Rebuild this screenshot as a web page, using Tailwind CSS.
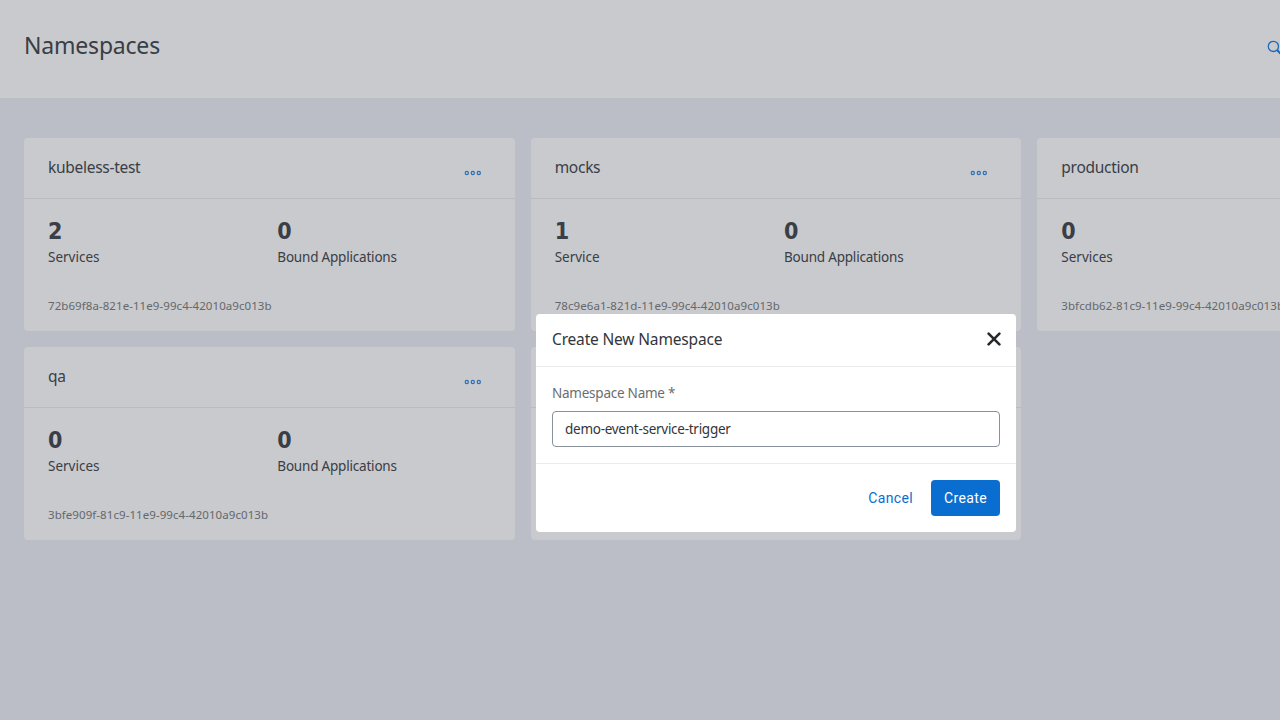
<!DOCTYPE html>
<html lang="en">
<head>
<meta charset="utf-8">
<title>Namespaces</title>
<script src="https://cdn.jsdelivr.net/npm/@tailwindcss/browser@4"></script>
</head>
<body class="h-screen w-screen overflow-hidden bg-[#eeeff7] font-['Noto_Sans',sans-serif] text-[#43484e]">
<div class="relative flex h-[846px] w-[1552px] flex-col">
  <header class="flex h-[98px] shrink-0 justify-between bg-white pl-6 pr-[269px]">
    <h1 class="pt-[29px] text-[23px] leading-8 tracking-[-0.2px]">Namespaces</h1>
    <svg class="mt-10 size-4 shrink-0" viewBox="0 0 16 16" fill="none" stroke="#2280e0"><circle cx="6.4" cy="6.4" r="5.1" stroke-width="1.3"/><path d="M10 10l4.5 4.5" stroke-width="2.2"/></svg>
  </header>
  <main class="grid grid-cols-3 gap-4 px-6 pt-10" id="cards"></main>
  <div class="absolute inset-0 flex items-center justify-center bg-[#1e222f]/24">
    <section class="flex h-[218px] w-[480px] flex-col rounded bg-white text-[#32363a]">
      <header class="flex h-[53px] items-center justify-between border-b border-[#eaebec] pl-4 pr-[15px]">
        <h2 class="-mt-0.5 text-[15.5px] leading-5 tracking-[-0.17px]">Create New Namespace</h2>
        <svg class="-mt-0.5 size-[14px]" viewBox="0 0 14 14" fill="none" stroke="#272a2d" stroke-width="2.6" stroke-linecap="round"><path d="M1.6 1.6l10.8 10.8M12.4 1.6L1.6 12.4"/></svg>
      </header>
      <div class="flex h-[97px] flex-col border-b border-[#eaebec] px-4 pt-4">
        <label class="text-[13.5px] leading-5 tracking-[-0.24px] text-[#6a6d70]">Namespace Name *</label>
        <div class="mt-2 flex h-9 items-center rounded border border-[#89919a] px-3 text-[13.5px] leading-5 tracking-[-0.27px]">demo-event-service-trigger</div>
      </div>
      <footer class="flex items-center justify-end pr-4 pt-4 font-['Roboto',sans-serif] text-sm tracking-[0.35px]">
        <button class="h-9 px-[18px] text-[#0a6ed1]">Cancel</button>
        <button class="h-9 w-[69px] rounded bg-[#0a6ed1] text-white">Create</button>
      </footer>
    </section>
  </div>
</div>
<script>
const items = [
  ['kubeless-test', '2', 'Services', '0', '72b69f8a-821e-11e9-99c4-42010a9c013b'],
  ['mocks', '1', 'Service', '0', '78c9e6a1-821d-11e9-99c4-42010a9c013b'],
  ['production', '0', 'Services', '0', '3bfcdb62-81c9-11e9-99c4-42010a9c013b'],
  ['qa', '0', 'Services', '0', '3bfe909f-81c9-11e9-99c4-42010a9c013b'],
  ['', '', '', '', '']
];
const number = n => `<div class="h-8 font-['DejaVu_Sans_Condensed','DejaVu_Sans',sans-serif] font-stretch-condensed text-[23px] font-bold leading-[33px] tracking-tight">${n}</div>`;
document.getElementById('cards').innerHTML = items.map(([name, n, label, b, id]) => `
  <article class="flex h-[193px] flex-col rounded bg-white">
    <div class="flex h-[61px] shrink-0 items-center justify-between border-b border-[#eaebec] pl-6 pr-[33px]">
      <h3 class="-mt-0.5 text-[15.5px] leading-5 tracking-[-0.28px]">${name}</h3>
      <svg class="mt-2.5 h-[6px] w-[18px]" viewBox="0 0 18 6" fill="none" stroke="#2f88e4" stroke-width="1.2"><circle cx="2.8" cy="3" r="1.6"/><circle cx="8.8" cy="3" r="1.6"/><circle cx="14.8" cy="3" r="1.6"/></svg>
    </div>
    <div class="grid grid-cols-2 gap-4 px-6 pt-4">
      <div>${number(n)}<div class="h-5 text-[13.5px] leading-5">${label}</div></div>
      <div>${number(b)}<div class="h-5 text-[13.5px] leading-5 tracking-[-0.2px]">${name && 'Bound Applications'}</div></div>
    </div>
    <div class="px-6 pt-[31px] text-[11.5px] leading-4 tracking-[0.07px] text-[#7b7e81]">${id}</div>
  </article>`).join('');
</script>
</body>
</html>
